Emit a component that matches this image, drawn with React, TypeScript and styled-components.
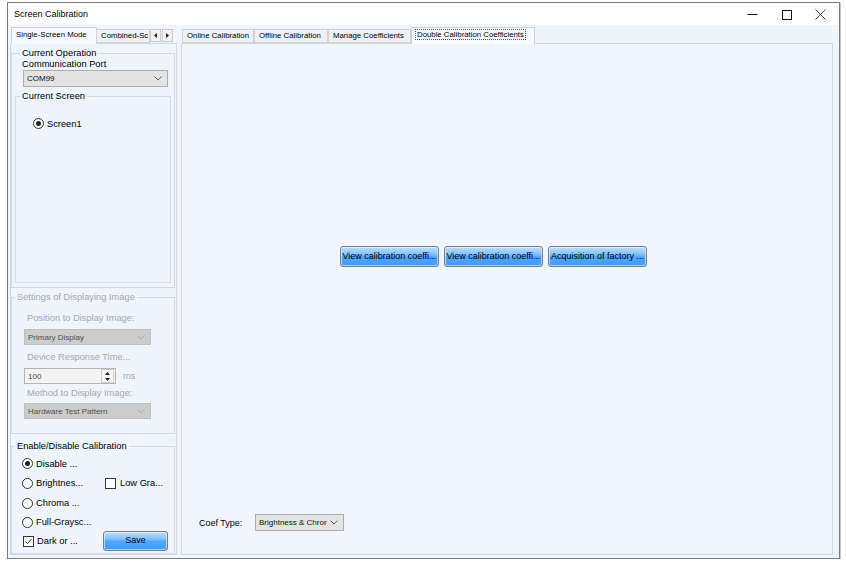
import React from 'react';
import styled, { createGlobalStyle } from 'styled-components';

const GlobalStyle = createGlobalStyle`
  html, body {
    margin: 0;
    padding: 0;
    background: #fff;
  }
  body {
    font-family: "Liberation Sans", Arial, sans-serif;
    color: #000;
  }
`;

const Window = styled.div`
  margin: 2px 0 0 7px;
  width: 833px;
  height: 557px;
  box-sizing: border-box;
  border: 1px solid #7d7d7d;
  box-shadow: 1px 1px 0 #c4c4c4;
  display: flex;
  flex-direction: column;
  background: #eef5fc;
`;

const TitleBar = styled.div`
  height: 22px;
  flex: none;
  background: #fff;
  display: flex;
  align-items: center;
  padding-left: 6px;
`;

const Title = styled.span`
  font-size: 9px;
  flex: 1;
`;

const Controls = styled.div`
  display: flex;
  padding-right: 2px;
`;

const CtrlButton = styled.div`
  width: 34px;
  height: 22px;
  display: flex;
  align-items: center;
  justify-content: center;
`;

const Body = styled.div`
  flex: 1;
  display: flex;
  gap: 4px;
  padding: 2px 6px 3px 2px;
  min-height: 0;
`;

const TabControl = styled.div<{ $width?: number }>`
  display: flex;
  flex-direction: column;
  ${(p) => (p.$width ? `width: ${p.$width}px;` : 'flex: 1;')}
`;

const TabStrip = styled.div`
  height: 16px;
  display: flex;
  align-items: flex-start;
  padding-left: 1px;
  position: relative;
  z-index: 1;
`;

const Tab = styled.div<{ $active?: boolean; $w: number }>`
  width: ${(p) => p.$w}px;
  box-sizing: border-box;
  height: ${(p) => (p.$active ? 17 : 14)}px;
  margin-top: ${(p) => (p.$active ? 0 : 2)}px;
  border: 1px solid #d2d2d2;
  border-bottom: ${(p) => (p.$active ? 'none' : '1px solid #d2d2d2')};
  background: ${(p) => (p.$active ? '#f7fbff' : '#eef2f6')};
  font-size: 7.8px;
  line-height: ${(p) => (p.$active ? 13 : 12)}px;
  white-space: nowrap;
  overflow: hidden;
  padding-left: 4px;
  margin-right: ${(p) => (p.$active ? -1 : 0)}px;
`;

const FocusText = styled.span`
  outline: 1px dotted #555;
  outline-offset: 0;
  padding: 0 1px;
`;

const Arrows = styled.div`
  display: flex;
  margin-top: 2px;
`;

const ArrowBtn = styled.div`
  width: 11px;
  height: 13px;
  box-sizing: border-box;
  border: 1px solid #c9c9c9;
  background: #f2f2f2;
  display: flex;
  align-items: center;
  justify-content: center;
  margin-right: 1px;
`;

const Pane = styled.div`
  flex: 1;
  border: 1px solid #d3d7dc;
  background: #eef5fc;
  display: flex;
  flex-direction: column;
  min-height: 0;
`;

const LeftPane = styled(Pane)`
  padding: 3px 1px 0 0;
`;

const Group = styled.fieldset<{ $h?: number; $disabled?: boolean }>`
  margin: 0;
  padding: 0;
  border: 1px solid #d6dadf;
  min-width: 0;
  box-sizing: border-box;
  ${(p) => (p.$h ? `height: ${p.$h}px; flex: none;` : 'flex: 1;')}
  color: ${(p) => (p.$disabled ? '#a8a8a8' : '#000')};
`;

const Legend = styled.legend<{ $ml: number }>`
  font-size: 9.3px;
  line-height: 12px;
  padding: 0 2px;
  margin-left: ${(p) => p.$ml}px;
`;

const Label = styled.div<{ $mt?: number; $ml?: number }>`
  font-size: 9.3px;
  line-height: 12px;
  margin-top: ${(p) => p.$mt ?? 0}px;
  margin-left: ${(p) => p.$ml ?? 0}px;
  white-space: nowrap;
`;

const GroupContent = styled.div<{ $pad: string }>`
  padding: ${(p) => p.$pad};
  display: flex;
  flex-direction: column;
  height: 100%;
  box-sizing: border-box;
`;

const Combo = styled.div<{ $w: number; $disabled?: boolean; $h?: number; $ml?: number; $mt?: number }>`
  width: ${(p) => p.$w}px;
  height: ${(p) => p.$h ?? 16}px;
  box-sizing: border-box;
  margin-left: ${(p) => p.$ml ?? 0}px;
  margin-top: ${(p) => p.$mt ?? 0}px;
  border: 1px solid ${(p) => (p.$disabled ? '#c0c0c0' : '#adadad')};
  background: ${(p) => (p.$disabled ? '#cccccc' : '#e3e3e3')};
  color: ${(p) => (p.$disabled ? '#4f4f4f' : '#111')};
  display: flex;
  align-items: center;
  gap: 3px;
  padding: 0 5px 0 3px;
  font-size: 8px;
  flex: none;
`;

const ComboText = styled.span`
  flex: 1;
  overflow: hidden;
  white-space: nowrap;
`;

const Spin = styled.div`
  width: 92px;
  height: 16px;
  box-sizing: border-box;
  border: 1px solid #b4b4b4;
  background: #f3f3f3;
  display: flex;
  align-items: center;
  font-size: 8px;
  color: #444;
  padding-left: 3px;
`;

const SpinButtons = styled.div`
  width: 11px;
  height: 12px;
  border: 1px solid #cfcfcf;
  margin-right: 1px;
  display: flex;
  flex-direction: column;
  align-items: center;
  justify-content: space-around;
  background: #f5f5f5;
`;

const SpinRow = styled.div`
  display: flex;
  align-items: center;
  gap: 7px;
  margin-top: 5px;
`;

const Unit = styled.span`
  font-size: 9.3px;
  color: #a8a8a8;
`;

const Option = styled.div<{ $gap?: number }>`
  display: flex;
  align-items: center;
  gap: ${(p) => p.$gap ?? 3}px;
  font-size: 9.3px;
  white-space: nowrap;
`;

const Radio = styled.span<{ $on?: boolean }>`
  width: 11px;
  height: 11px;
  box-sizing: border-box;
  border-radius: 50%;
  border: 1px solid #333;
  background: #fff;
  display: flex;
  align-items: center;
  justify-content: center;
  flex: none;
  &::after {
    content: '';
    width: 5px;
    height: 5px;
    border-radius: 50%;
    background: ${(p) => (p.$on ? '#222' : 'transparent')};
  }
`;

const Check = styled.span`
  width: 11px;
  height: 11px;
  box-sizing: border-box;
  border: 1px solid #333;
  background: #fff;
  display: flex;
  align-items: center;
  justify-content: center;
  flex: none;
`;

const CalibGrid = styled.div`
  display: grid;
  grid-template-columns: 81px 1fr;
  grid-template-rows: 19px 20px 20px 18px 20px;
  align-items: center;
  padding: 2px 0 0 10px;
`;

const BlueButton = styled.div<{ $w: number; $h: number }>`
  width: ${(p) => p.$w}px;
  height: ${(p) => p.$h}px;
  box-sizing: border-box;
  border: 1px solid #7b7b7b;
  border-radius: 3px;
  box-shadow: inset 0 0 0 1px rgba(255, 255, 255, 0.55);
  background: linear-gradient(#bfe0ff 0%, #7cc0ff 40%, #4fa6ff 52%, #3f9bfb 100%);
  font-size: 9px;
  line-height: ${(p) => p.$h - 3}px;
  text-align: center;
  white-space: nowrap;
  overflow: hidden;
  color: #000;
`;

const RightPane = styled(Pane)`
  background: #eff6fe;
`;

const ButtonRow = styled.div`
  display: flex;
  gap: 5px;
  padding: 202px 0 0 158px;
`;

const CoefRow = styled.div`
  margin-top: auto;
  margin-bottom: 23px;
  padding-left: 17px;
  display: flex;
  align-items: center;
`;

const CoefLabel = styled.span`
  width: 56px;
  font-size: 9px;
`;

const Chevron = ({ color = '#666' }: { color?: string }) => (
  <svg width="8" height="5" viewBox="0 0 8 5">
    <polyline points="0.5,0.5 4,4 7.5,0.5" fill="none" stroke={color} strokeWidth="1" />
  </svg>
);

const Tri = ({ dir }: { dir: 'left' | 'right' | 'up' | 'down' }) => {
  const pts = {
    left: '3,0 0,2.5 3,5',
    right: '0,0 3,2.5 0,5',
    up: '0,3 2.5,0 5,3',
    down: '0,0 2.5,3 5,0',
  }[dir];
  const horiz = dir === 'left' || dir === 'right';
  return (
    <svg width={horiz ? 3 : 5} height={horiz ? 5 : 3} viewBox={horiz ? '0 0 3 5' : '0 0 5 3'}>
      <polygon points={pts} fill="#222" />
    </svg>
  );
};

const CheckMark = () => (
  <svg width="9" height="9" viewBox="0 0 9 9">
    <polyline points="1.5,4.5 3.5,6.5 7.5,2" fill="none" stroke="#222" strokeWidth="1" />
  </svg>
);

export default function App() {
  return (
    <>
      <GlobalStyle />
      <Window>
        <TitleBar>
          <Title>Screen Calibration</Title>
          <Controls>
            <CtrlButton>
              <svg width="11" height="11" viewBox="0 0 11 11">
                <line x1="0.5" y1="5.5" x2="10.5" y2="5.5" stroke="#111" strokeWidth="1" />
              </svg>
            </CtrlButton>
            <CtrlButton>
              <svg width="11" height="11" viewBox="0 0 11 11">
                <rect x="1.5" y="1.5" width="9" height="9" fill="none" stroke="#111" strokeWidth="1" />
              </svg>
            </CtrlButton>
            <CtrlButton>
              <svg width="11" height="11" viewBox="0 0 11 11">
                <line x1="0.5" y1="0.5" x2="10.5" y2="10.5" stroke="#333" strokeWidth="0.9" />
                <line x1="10.5" y1="0.5" x2="0.5" y2="10.5" stroke="#333" strokeWidth="0.9" />
              </svg>
            </CtrlButton>
          </Controls>
        </TitleBar>

        <Body>
          <TabControl $width={167}>
            <TabStrip>
              <Tab $active $w={86}>Single-Screen Mode</Tab>
              <Tab $w={54}>Combined-Sc</Tab>
              <Arrows>
                <ArrowBtn><Tri dir="left" /></ArrowBtn>
                <ArrowBtn><Tri dir="right" /></ArrowBtn>
              </Arrows>
            </TabStrip>
            <LeftPane>
              <Group $h={241}>
                <Legend $ml={8}>Current Operation</Legend>
                <GroupContent $pad="0 3px 0 3px">
                  <Label $ml={7} style={{ lineHeight: '11px' }}>Communication Port</Label>
                  <Combo $w={145} $h={17} $ml={8}>
                    <ComboText>COM99</ComboText>
                    <Chevron />
                  </Combo>
                  <Group $h={193} style={{ marginTop: 3 }}>
                    <Legend $ml={4}>Current Screen</Legend>
                    <GroupContent $pad="16px 0 0 17px">
                      <Option $gap={3}>
                        <Radio $on />
                        <span>Screen1</span>
                      </Option>
                    </GroupContent>
                  </Group>
                </GroupContent>
              </Group>

              <Group $h={143} $disabled style={{ marginTop: 3 }}>
                <Legend $ml={3}>Settings of Displaying Image</Legend>
                <GroupContent $pad="0 0 0 12px">
                  <Label $mt={9} $ml={3}>Position to Display Image:</Label>
                  <Combo $w={127} $disabled $mt={5}>
                    <ComboText>Primary Display</ComboText>
                    <Chevron color="#aaa" />
                  </Combo>
                  <Label $mt={6} $ml={3}>Device Response Time...</Label>
                  <SpinRow>
                    <Spin>
                      <ComboText>100</ComboText>
                      <SpinButtons>
                        <Tri dir="up" />
                        <Tri dir="down" />
                      </SpinButtons>
                    </Spin>
                    <Unit>ms</Unit>
                  </SpinRow>
                  <Label $mt={3} $ml={3}>Method to Display Image:</Label>
                  <Combo $w={127} $disabled $mt={4}>
                    <ComboText>Hardware Test Pattern</ComboText>
                    <Chevron color="#aaa" />
                  </Combo>
                </GroupContent>
              </Group>

              <Group style={{ marginTop: 6 }}>
                <Legend $ml={3}>Enable/Disable Calibration</Legend>
                <CalibGrid>
                  <Option><Radio $on /><span>Disable ...</span></Option>
                  <span />
                  <Option><Radio /><span>Brightnes...</span></Option>
                  <Option $gap={4} style={{ marginLeft: 2 }}><Check /><span>Low Gra...</span></Option>
                  <Option><Radio /><span>Chroma ...</span></Option>
                  <span />
                  <Option><Radio /><span>Full-Graysc...</span></Option>
                  <span />
                  <Option style={{ marginLeft: 1 }}><Check><CheckMark /></Check><span>Dark or ...</span></Option>
                  <BlueButton $w={65} $h={20}>Save</BlueButton>
                </CalibGrid>
              </Group>
            </LeftPane>
          </TabControl>

          <TabControl>
            <TabStrip>
              <Tab $w={72}>Online Calibration</Tab>
              <Tab $w={74}>Offline Calibration</Tab>
              <Tab $w={83}>Manage Coefficients</Tab>
              <Tab $active $w={124}><FocusText>Double Calibration Coefficients</FocusText></Tab>
            </TabStrip>
            <RightPane>
              <ButtonRow>
                <BlueButton $w={99} $h={21}>View calibration coeffi...</BlueButton>
                <BlueButton $w={99} $h={21}>View calibration coeffi...</BlueButton>
                <BlueButton $w={99} $h={21}>Acquisition of factory ...</BlueButton>
              </ButtonRow>
              <CoefRow>
                <CoefLabel>Coef Type:</CoefLabel>
                <Combo $w={89} $h={17}>
                  <ComboText>Brightness &amp; Chror</ComboText>
                  <Chevron />
                </Combo>
              </CoefRow>
            </RightPane>
          </TabControl>
        </Body>
      </Window>
    </>
  );
}
